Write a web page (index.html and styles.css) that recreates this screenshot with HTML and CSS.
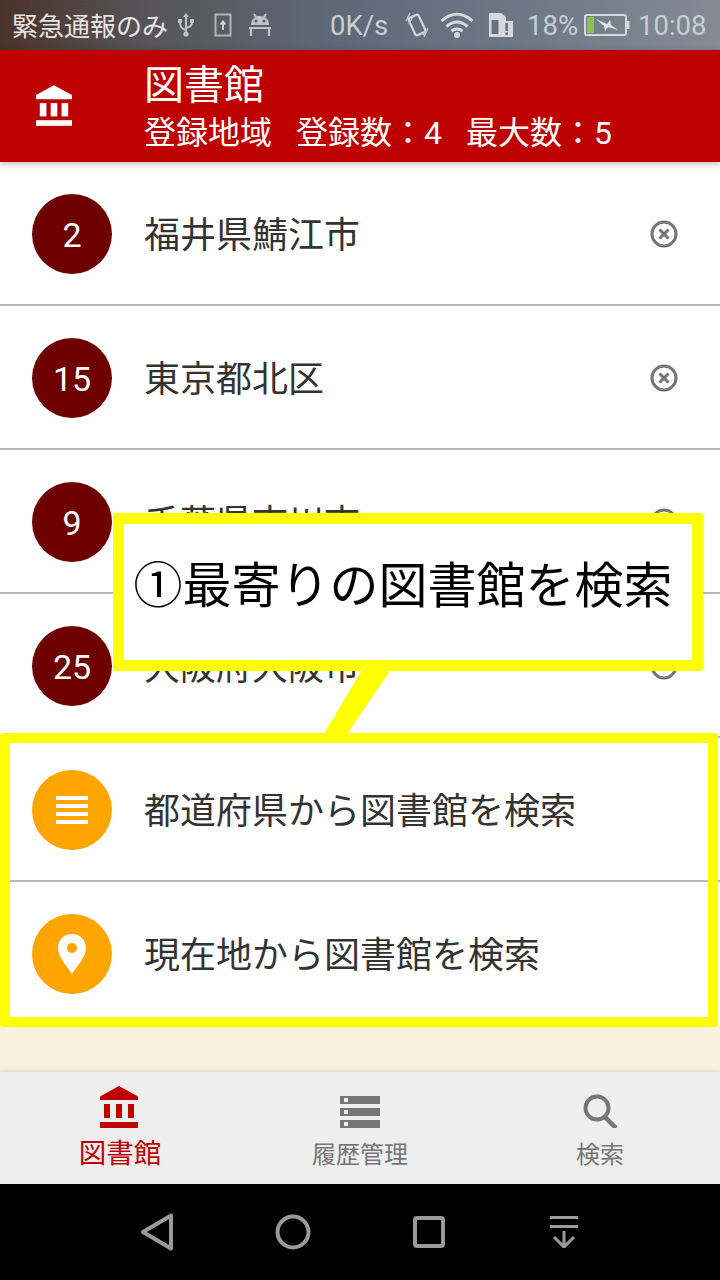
FILE: index.html
```html
<!DOCTYPE html>
<html lang="ja">
<head>
<meta charset="utf-8">
<title>図書館</title>
<link rel="stylesheet" href="styles.css">
</head>
<body>
<div class="app">
  <div class="status">
    <span class="carrier">緊急通報のみ</span>
    <svg class="st-usb" width="16" height="24" viewBox="0 0 16 24"><path d="M8 2v19M8 17C3 16 2 13 2 9M8 15c5-1 6-3 6-6" fill="none" stroke="#bfc3c8" stroke-width="2"/><path d="M8 0l3 4H5z" fill="#bfc3c8"/><rect x="0" y="6" width="4" height="4" fill="#bfc3c8"/><rect x="12" y="6" width="4" height="4" fill="#bfc3c8"/><circle cx="8" cy="21" r="2.600" fill="#bfc3c8"/></svg>
    <svg class="st-box" width="18" height="24" viewBox="0 0 18 24"><rect x="1.500" y="1.500" width="15" height="21" fill="none" stroke="#b0b3b8" stroke-width="2"/><path d="M9 17V9M6.500 11.500L9 8.500l2.500 3" fill="none" stroke="#d5d7da" stroke-width="1.800"/></svg>
    <svg class="st-android" width="22" height="24" viewBox="0 0 22 24"><path d="M2 12C2 6 6 3 11 3s9 3 9 9z" fill="#bfc3c8"/><path d="M5 1l2 3M17 1l-2 3M0 15h22M2 15v8M20 15v8" fill="none" stroke="#bfc3c8" stroke-width="2.200"/><circle cx="7" cy="8" r="1.500" fill="#5a5a60"/><circle cx="15" cy="8" r="1.500" fill="#5a5a60"/></svg>
    <span class="speed">0K/s</span>
    <svg class="st-vib" width="24" height="26" viewBox="0 0 24 26"><rect x="6.500" y="3.500" width="11" height="19" rx="2" transform="rotate(-25 12 13)" fill="none" stroke="#d4d8dc" stroke-width="2.200"/><path d="M1 9l4-8M4 12l3-6M23 16l-4 9M20 19l-2 4" fill="none" stroke="#c2c7cd" stroke-width="1.400"/></svg>
    <svg class="st-wifi" width="34" height="26" viewBox="0 0 34 26"><path d="M1.500 9c10-9 21-9 31 0M6.500 14.500c7-6 14-6 21 0M11.500 19c4-3 7-3 11 0" fill="none" stroke="#d6dade" stroke-width="3"/><circle cx="17" cy="23" r="3" fill="#d6dade"/></svg>
    <svg class="st-sim" width="24" height="24" viewBox="0 0 24 24"><path d="M0 0h12l5 4v4H11v16H0z" fill="#d6dade"/><rect x="2.500" y="7" width="7" height="14" fill="#667180"/><rect x="11" y="8" width="13" height="16" fill="#d6dade"/><rect x="16.300" y="10" width="2.600" height="8" fill="#667180"/><rect x="16.300" y="19.500" width="2.600" height="2.600" fill="#667180"/></svg>
    <span class="pct">18%</span>
    <svg class="st-bat" width="46" height="24" viewBox="0 0 46 24"><rect x="1" y="2" width="41" height="20" rx="2" fill="none" stroke="#d6dade" stroke-width="2"/><rect x="3" y="4" width="7" height="16" fill="#8bc34a"/><rect x="43" y="8" width="2.500" height="8" fill="#d6dade"/><path d="M12 6l11 5 3-4 1 5 7 5-10-3-3 4-1-5z" fill="#dfe2e6"/></svg>
    <span class="clock">10:08</span>
  </div>

  <header class="head">
    <div class="head-icon">
      <svg width="38" height="43" viewBox="0 0 38 43"><path class="w" d="M19 0L38 10.500V15H0V10.500z"/><rect class="w" x="4" y="19" width="7" height="14"/><rect class="w" x="15.500" y="19" width="7" height="14"/><rect class="w" x="27" y="19" width="7" height="14"/><rect class="w" x="0" y="37" width="38" height="6"/></svg>
    </div>
    <div class="head-text">
      <div class="title">図書館</div>
      <div class="sub"><span>登録地域</span><span>登録数：4</span><span>最大数：5</span></div>
    </div>
  </header>

  <main class="list">
    <div class="row"><div class="badge">2</div><div class="name">福井県鯖江市</div><svg class="close" width="28" height="28" viewBox="0 0 28 28"><circle cx="14" cy="14" r="12" /><path d="M9.500 9.500l9 9M18.500 9.500l-9 9"/></svg></div>
    <div class="row"><div class="badge">15</div><div class="name">東京都北区</div><svg class="close" width="28" height="28" viewBox="0 0 28 28"><circle cx="14" cy="14" r="12" /><path d="M9.500 9.500l9 9M18.500 9.500l-9 9"/></svg></div>
    <div class="row"><div class="badge">9</div><div class="name">千葉県市川市</div><svg class="close" width="28" height="28" viewBox="0 0 28 28"><circle cx="14" cy="14" r="12" /><path d="M9.500 9.500l9 9M18.500 9.500l-9 9"/></svg></div>
    <div class="row"><div class="badge">25</div><div class="name">大阪府大阪市</div><svg class="close" width="28" height="28" viewBox="0 0 28 28"><circle cx="14" cy="14" r="12" /><path d="M9.500 9.500l9 9M18.500 9.500l-9 9"/></svg></div>
    <div class="row"><div class="badge orange"><svg width="32" height="28" viewBox="0 0 32 28"><rect class="w" y="0" width="32" height="4"/><rect class="w" y="8" width="32" height="4"/><rect class="w" y="16" width="32" height="4"/><rect class="w" y="24" width="32" height="4"/></svg></div><div class="name">都道府県から図書館を検索</div></div>
    <div class="row last"><div class="badge orange"><svg width="28" height="40" viewBox="0 0 28 40"><path class="w" d="M14 0C6 0 0 6 0 14c0 9 9 18 14 26 5-8 14-17 14-26C28 6 22 0 14 0z"/><circle cx="14" cy="14" r="5" fill="#ffa500"/></svg></div><div class="name">現在地から図書館を検索</div></div>
  </main>
  <div class="spacer"></div>

  <nav class="tabs">
    <div class="tab active">
      <svg class="tab-ic" width="38" height="42" viewBox="0 0 38 42"><path d="M19 0L38 10.500V14H0V10.500z"/><rect x="4" y="18" width="6" height="14"/><rect x="16" y="18" width="6" height="14"/><rect x="28" y="18" width="6" height="14"/><rect x="0" y="36" width="38" height="6"/></svg>
      <span>図書館</span>
    </div>
    <div class="tab">
      <svg class="tab-ic" width="40" height="42" viewBox="0 0 40 42"><path d="M0 10h40v8H0zM0 22h40v8H0zM0 34h40v8H0z"/><path fill="#eee" d="M4 12h4v4H4zM4 24h4v4H4zM4 36h4v4H4z"/></svg>
      <span>履歴管理</span>
    </div>
    <div class="tab">
      <svg class="tab-ic" width="36" height="42" viewBox="0 0 36 42"><circle cx="15" cy="22" r="11.500" fill="none" stroke="#757575" stroke-width="4"/><path d="M23 31l11 11" fill="none" stroke="#757575" stroke-width="4.500"/></svg>
      <span>検索</span>
    </div>
  </nav>

  <div class="sysnav">
    <svg width="34" height="38" viewBox="0 0 34 38"><path d="M31 2.500L3 19l28 16.500z" fill="none" stroke="#9a9a9a" stroke-width="4" stroke-linejoin="round"/></svg>
    <svg width="36" height="36" viewBox="0 0 36 36"><circle cx="18" cy="18" r="15.500" fill="none" stroke="#9a9a9a" stroke-width="4"/></svg>
    <svg width="32" height="32" viewBox="0 0 32 32"><rect x="2" y="2" width="28" height="28" rx="2" fill="none" stroke="#9a9a9a" stroke-width="4"/></svg>
    <svg width="28" height="32" viewBox="0 0 28 32"><path d="M0 1.500h28M0 10.500h28M14 15v16M4 21l10 10 10-10" fill="none" stroke="#9a9a9a" stroke-width="3"/></svg>
  </div>

  <div class="frame"></div>
  <svg class="tail" width="72" height="66" viewBox="0 0 72 66"><path d="M39 0H68L23 66H0z" fill="#ffff00"/></svg>
  <div class="callout">①最寄りの図書館を検索</div>
</div>
</body>
</html>
```
FILE: styles.css
```css
html, body { margin: 0; padding: 0; }
body { font-family: Roboto, "Noto Sans CJK JP", sans-serif; }
.app { position: relative; width: 720px; height: 1280px; display: flex; flex-direction: column; overflow: hidden; background: #f8f1dc; }
.w { fill: #fff; }

.status { height: 50px; flex: none; display: flex; align-items: center; padding-left: 12px; background: linear-gradient(90deg, #4a3329 0%, #565458 20%, #5f6b7a 50%, #6f7a87 75%, #858b93 100%); color: #c9ced4; font-size: 27.500px; }
.carrier { color: #e6e4e2; font-size: 26px; width: 166px; flex: none; margin-top: -2px; }
.st-usb { flex: none; }
.st-box { margin-left: 20px; flex: none; }
.st-android { margin-left: 17px; flex: none; }
.speed { margin-left: 59px; width: 75px; }
.st-vib { flex: none; }
.st-wifi { margin-left: 11px; flex: none; }
.st-sim { margin-left: 15px; flex: none; }
.pct { margin-left: 14px; width: 57px; }
.st-bat { flex: none; }
.clock { margin-left: 8px; }

.head { height: 112px; flex: none; display: flex; align-items: center; background: #bf0000; color: #fff; position: relative; z-index: 1; box-shadow: 0 2px 6px rgba(0,0,0,.25); }
.head-icon { width: 36px; margin-left: 36px; display: flex; margin-top: -2px; }
.head-text { margin-left: 72px; display: flex; flex-direction: column; margin-top: 8px; }
.title { font-size: 40px; line-height: 47px; }
.sub { font-size: 32px; line-height: 49px; display: flex; gap: 24px; }

.list { flex: none; }
.row { height: 144px; box-sizing: border-box; display: flex; align-items: center; padding-left: 32px; background: #fff; box-shadow: inset 0 -2px 0 #b9b9b9; }
.row.last { box-shadow: none; }
.badge { width: 80px; height: 80px; flex: none; border-radius: 50%; background: #6e0000; color: #fff; font-size: 34px; padding-top: 2px; box-sizing: border-box; display: flex; align-items: center; justify-content: center; }
.badge.orange { background: #ffa500; padding-top: 0; }
.name { margin: -4px 0 0 32px; font-size: 36px; color: #333; flex: 1; }
.close { margin-right: 42px; flex: none; fill: none; stroke: #757575; stroke-width: 3; }

.spacer { flex: 1; }

.tabs { height: 112px; flex: none; display: flex; background: #eee; box-shadow: 0 -1px 3px rgba(0,0,0,.12); position: relative; }
.tab { flex: 1; display: flex; flex-direction: column; align-items: center; color: #757575; font-size: 24px; padding-top: 14px; }
.tab-ic { fill: #757575; flex: none; }
.tab span { line-height: 32px; margin-top: 11px; }
.tab.active { color: #bf0000; font-size: 27.500px; }
.tab.active .tab-ic { fill: #bf0000; margin-left: -2px; }
.tab.active span { margin-top: 10px; }

.sysnav { height: 96px; flex: none; background: #000; display: flex; align-items: center; justify-content: center; gap: 0; }
.sysnav svg { flex: none; }
.sysnav svg:nth-child(1) { margin-right: 101px; margin-left: -2px; }
.sysnav svg:nth-child(2) { margin-right: 102px; }
.sysnav svg:nth-child(3) { margin-right: 105px; }

.frame { position: absolute; left: 0; top: 733px; width: 718px; height: 294px; box-sizing: border-box; border: 10.500px solid #ffff00; border-radius: 3px; }
.callout { position: absolute; left: 113px; top: 513px; width: 590px; height: 158px; box-sizing: border-box; border: 11px solid #ffff00; border-radius: 3px; background: #fff; color: #000; font-family: "Noto Sans CJK JP", sans-serif; font-size: 49px; display: flex; justify-content: center; padding: 28px 10px 0 0; line-height: 60px; white-space: nowrap; }
.tail { position: absolute; left: 324px; top: 668px; }
```
